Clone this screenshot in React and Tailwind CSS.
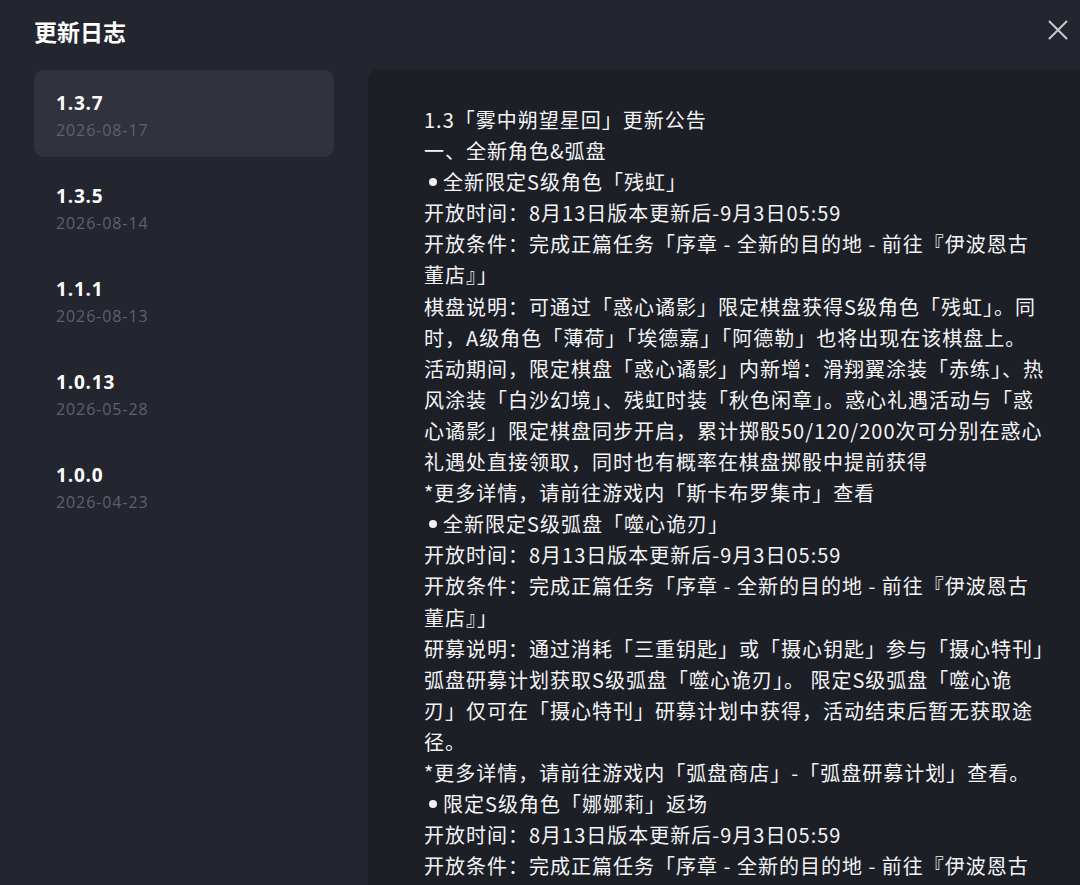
import React, { useState } from "react";

const versions = [
  { id: "1.3.7", date: "2026-08-17" },
  { id: "1.3.5", date: "2026-08-14" },
  { id: "1.1.1", date: "2026-08-13" },
  { id: "1.0.13", date: "2026-05-28" },
  { id: "1.0.0", date: "2026-04-23" },
];

// release notes, one entry per rendered line; bullet lines start with "●"
const notes = [
  "1.3「雾中朔望星回」更新公告",
  "一、全新角色&弧盘",
  "●全新限定S级角色「残虹」",
  "开放时间：8月13日版本更新后-9月3日05:59",
  "开放条件：完成正篇任务「序章 - 全新的目的地 - 前往『伊波恩古",
  "董店』」",
  "棋盘说明：可通过「惑心谲影」限定棋盘获得S级角色「残虹」。同",
  "时，A级角色「薄荷」「埃德嘉」「阿德勒」也将出现在该棋盘上。",
  "活动期间，限定棋盘「惑心谲影」内新增：滑翔翼涂装「赤练」、热",
  "风涂装「白沙幻境」、残虹时装「秋色闲章」。惑心礼遇活动与「惑",
  "心谲影」限定棋盘同步开启，累计掷骰50/120/200次可分别在惑心",
  "礼遇处直接领取，同时也有概率在棋盘掷骰中提前获得",
  "*更多详情，请前往游戏内「斯卡布罗集市」查看",
  "●全新限定S级弧盘「噬心诡刃」",
  "开放时间：8月13日版本更新后-9月3日05:59",
  "开放条件：完成正篇任务「序章 - 全新的目的地 - 前往『伊波恩古",
  "董店』」",
  "研募说明：通过消耗「三重钥匙」或「摄心钥匙」参与「摄心特刊」",
  "弧盘研募计划获取S级弧盘「噬心诡刃」。 限定S级弧盘「噬心诡",
  "刃」仅可在「摄心特刊」研募计划中获得，活动结束后暂无获取途",
  "径。",
  "*更多详情，请前往游戏内「弧盘商店」-「弧盘研募计划」查看。",
  "●限定S级角色「娜娜莉」返场",
  "开放时间：8月13日版本更新后-9月3日05:59",
  "开放条件：完成正篇任务「序章 - 全新的目的地 - 前往『伊波恩古",
];

const CloseIcon = () => (
  <svg width="22" height="22" viewBox="0 0 22 22" fill="none">
    <path
      d="M2.5 2.5L19.5 19.5M19.5 2.5L2.5 19.5"
      stroke="#c9cad0"
      strokeWidth="2"
      strokeLinecap="round"
    />
  </svg>
);

const NoteLine = ({ text }) => {
  if (text.startsWith("●")) {
    return (
      <div className="flex items-center">
        <span className="w-[8px] h-[8px] rounded-full bg-[#f2f2f4] ml-[5px] mr-[6px]" />
        <span>{text.slice(1)}</span>
      </div>
    );
  }
  return <div>{text}</div>;
};

const App = () => {
  const [active, setActive] = useState("1.3.7");

  return (
    <div className="w-[1080px] h-[885px] bg-[#23252f] overflow-hidden flex flex-col font-['Noto_Sans','Noto_Sans_CJK_SC',sans-serif]">
      <div className="h-[69px] shrink-0 flex items-start justify-between pl-[34px] pr-[11px]">
        <h1 className="mt-[16px] text-[23px] leading-[30px] font-bold text-white font-['Noto_Sans_CJK_SC',sans-serif]">
          更新日志
        </h1>
        <button className="mt-[19px]" title="关闭">
          <CloseIcon />
        </button>
      </div>

      <div className="flex flex-1 min-h-0">
        <div className="w-[300px] ml-[34px] mt-[1px] flex flex-col gap-[6px] shrink-0">
          {versions.map((v) => (
            <div
              key={v.id}
              onClick={() => setActive(v.id)}
              className={`h-[87px] rounded-[10px] px-[22px] pt-[21px] cursor-pointer ${
                active === v.id ? "bg-[#30323e]" : ""
              }`}
            >
              <div className="text-[19px] leading-[24px] font-bold tracking-[0.8px] text-white font-['Open_Sans',sans-serif]">
                {v.id}
              </div>
              <div className="mt-[3px] text-[16px] leading-[24px] tracking-[0.9px] text-[#5e616e] font-['Open_Sans',sans-serif]">
                {v.date}
              </div>
            </div>
          ))}
        </div>

        <div className="flex-1 ml-[34px] rounded-tl-[12px] bg-[#1d1f27] pl-[56px] pt-[35px] overflow-hidden">
          <div className="whitespace-nowrap text-[20px] leading-[31.1px] tracking-[1px] text-[#f4f4f6] font-['Noto_Sans_CJK_SC',sans-serif]">
            {notes.map((line, i) => (
              <NoteLine key={i} text={line} />
            ))}
          </div>
        </div>
      </div>
    </div>
  );
};

export default App;
